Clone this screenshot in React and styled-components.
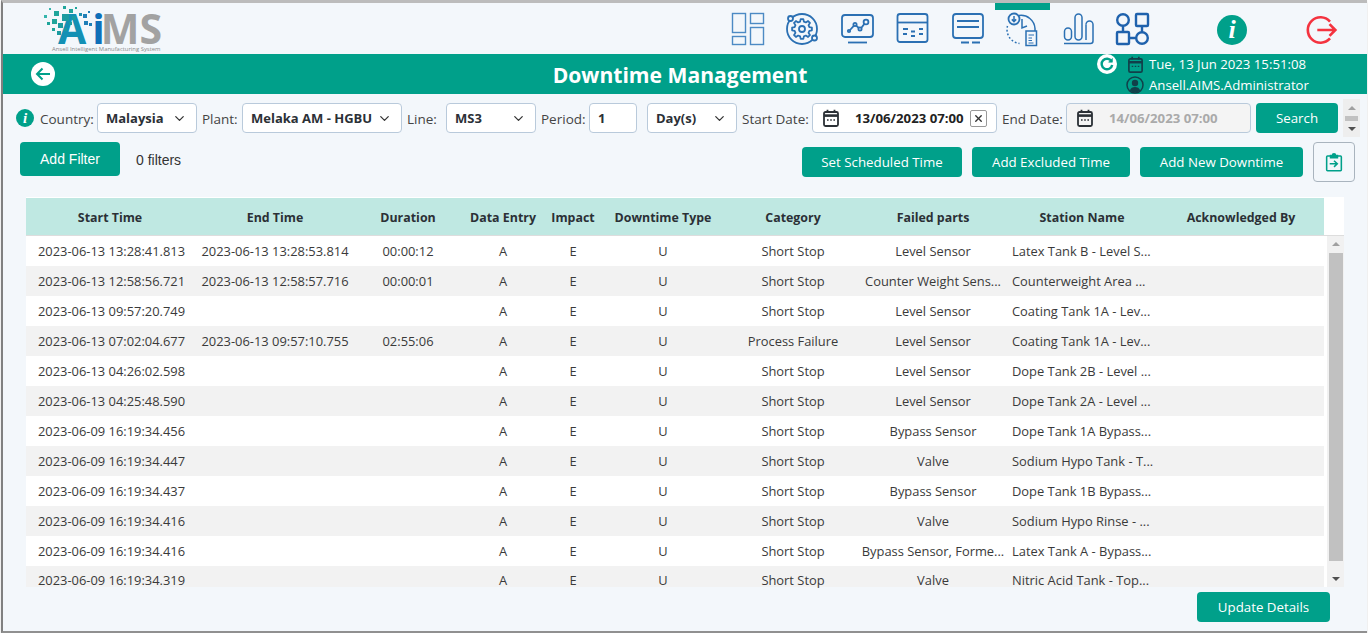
import React from 'react';
import styled, { createGlobalStyle } from 'styled-components';
import { ChevronDown, X } from 'lucide-react';

const FONT = '"Open Sans", "Noto Sans", sans-serif';
const TEAL = '#00a08a';
const ICON_BLUE = '#2b70b3';
const PAGE_BG = '#f3f7fb';

const GlobalStyle = createGlobalStyle`
  html, body {
    margin: 0;
    padding: 0;
    background: #fff;
    overflow: hidden;
  }
  * { box-sizing: border-box; }
`;

const columns = [
  { title: 'Start Time', key: 'start' },
  { title: 'End Time', key: 'end' },
  { title: 'Duration', key: 'duration' },
  { title: 'Data Entry', key: 'entry' },
  { title: 'Impact', key: 'impact' },
  { title: 'Downtime Type', key: 'type' },
  { title: 'Category', key: 'category' },
  { title: 'Failed parts', key: 'parts' },
  { title: 'Station Name', key: 'station' },
  { title: 'Acknowledged By', key: 'ack' },
];

const rows = [
  ['2023-06-13 13:28:41.813', '2023-06-13 13:28:53.814', '00:00:12', 'Short Stop', 'Level Sensor', 'Latex Tank B - Level S...'],
  ['2023-06-13 12:58:56.721', '2023-06-13 12:58:57.716', '00:00:01', 'Short Stop', 'Counter Weight Sens...', 'Counterweight Area ...'],
  ['2023-06-13 09:57:20.749', '', '', 'Short Stop', 'Level Sensor', 'Coating Tank 1A - Lev...'],
  ['2023-06-13 07:02:04.677', '2023-06-13 09:57:10.755', '02:55:06', 'Process Failure', 'Level Sensor', 'Coating Tank 1A - Lev...'],
  ['2023-06-13 04:26:02.598', '', '', 'Short Stop', 'Level Sensor', 'Dope Tank 2B - Level ...'],
  ['2023-06-13 04:25:48.590', '', '', 'Short Stop', 'Level Sensor', 'Dope Tank 2A - Level ...'],
  ['2023-06-09 16:19:34.456', '', '', 'Short Stop', 'Bypass Sensor', 'Dope Tank 1A Bypass...'],
  ['2023-06-09 16:19:34.447', '', '', 'Short Stop', 'Valve', 'Sodium Hypo Tank - T...'],
  ['2023-06-09 16:19:34.437', '', '', 'Short Stop', 'Bypass Sensor', 'Dope Tank 1B Bypass...'],
  ['2023-06-09 16:19:34.416', '', '', 'Short Stop', 'Valve', 'Sodium Hypo Rinse - ...'],
  ['2023-06-09 16:19:34.416', '', '', 'Short Stop', 'Bypass Sensor, Forme...', 'Latex Tank A - Bypass...'],
  ['2023-06-09 16:19:34.319', '', '', 'Short Stop', 'Valve', 'Nitric Acid Tank - Top...'],
];

// x, y, size, colour of the pixel cloud around the logo
const logoSquares = [
  [1, 9, 3, '#35b5ab'], [6, 2, 2, '#35b5ab'], [11, 5, 5, '#1fa59b'], [20, 0, 3, '#1fa59b'],
  [26, 3, 4, '#1fa59b'], [32, 1, 2, '#1fa59b'], [19, 8, 7, '#1b9ba0'], [29, 10, 4, '#1b9ba0'],
  [4, 16, 3, '#1fa59b'], [9, 13, 5, '#1fa59b'], [15, 17, 5, '#1b9ba0'], [9, 22, 3, '#1fa59b'],
  [14, 25, 4, '#1b9ba0'], [21, 22, 3, '#1b9ba0'], [36, 7, 3, '#1f8fb0'], [26, 16, 3, '#1b9ba0'],
  [40, 8, 4, '#1f7fb8'], [45, 5, 2, '#1f7fb8'], [41, 15, 4, '#1f7fb8'], [46, 17, 3, '#1f7fb8'],
];

function gearPath(cx, cy, outer, inner, teeth) {
  const step = (Math.PI * 2) / teeth;
  const pts = [];
  for (let i = 0; i < teeth; i++) {
    const a = i * step;
    [[-0.32, inner], [-0.17, outer], [0.17, outer], [0.32, inner]].forEach(([k, r]) => {
      const t = a + k * step;
      pts.push(`${(cx + r * Math.cos(t)).toFixed(2)} ${(cy + r * Math.sin(t)).toFixed(2)}`);
    });
  }
  return `M${pts.join('L')}Z`;
}

function CalendarIcon({ color = '#2b3036', size = 18 }) {
  return (
    <svg width={size} height={size} viewBox="0 0 18 18" fill="none" stroke={color} strokeWidth="1.8">
      <rect x="2" y="3" width="14" height="14" rx="1.5" />
      <path d="M2 6.6h14" strokeWidth="2.6" />
      <path d="M5.5 0.8v3M12.5 0.8v3" />
      <path d="M5 11h1.6M8.2 11h1.6M11.4 11h1.6" strokeWidth="1.5" />
    </svg>
  );
}

function NavIcon({ name }) {
  switch (name) {
    case 'dashboard':
      return (
        <svg width="36" height="36" viewBox="0 0 36 36" fill="none" stroke="#4c8ac4" strokeWidth="1.4">
          <rect x="2.5" y="2.5" width="13" height="19" />
          <rect x="2.5" y="25.5" width="13" height="8" />
          <rect x="20.5" y="2.5" width="13" height="10" />
          <rect x="20.5" y="16.5" width="13" height="17" />
        </svg>
      );
    case 'gear':
      return (
        <svg width="36" height="36" viewBox="0 0 36 36" fill="none" stroke={ICON_BLUE} strokeWidth="1.8">
          <circle cx="17" cy="18" r="15" />
          <circle cx="5.5" cy="7.5" r="2.5" fill={PAGE_BG} />
          <circle cx="29.5" cy="27" r="2.5" fill={PAGE_BG} />
          <path d={gearPath(17, 18, 10, 7.6, 8)} strokeLinejoin="round" />
          <circle cx="17" cy="18" r="3" />
        </svg>
      );
    case 'monitorChart':
      return (
        <svg width="36" height="36" viewBox="0 0 36 36" fill="none" stroke={ICON_BLUE} strokeWidth="1.8">
          <rect x="2" y="4" width="31" height="22" rx="3" />
          <path d="M8 31.5h19" />
          <circle cx="9" cy="20" r="1.2" />
          <circle cx="15" cy="13.5" r="1.6" />
          <circle cx="20" cy="18" r="1.6" />
          <circle cx="26" cy="11" r="2.4" />
          <path d="M10 19l4-4.3M16.2 14.6l2.6 2.4M21.2 17l3.4-4.4" />
        </svg>
      );
    case 'window':
      return (
        <svg width="36" height="36" viewBox="0 0 36 36" fill="none" stroke={ICON_BLUE} strokeWidth="1.8">
          <rect x="2.5" y="3" width="30" height="28" rx="2.5" />
          <path d="M2.5 11.5h30" />
          <path d="M8 18h5M8 23h4M16 20.5h4M16 25h4M24 18h4M24 23h4" />
        </svg>
      );
    case 'monitorLines':
      return (
        <svg width="36" height="36" viewBox="0 0 36 36" fill="none" stroke={ICON_BLUE} strokeWidth="1.8">
          <rect x="3" y="3" width="30" height="24" rx="3" />
          <path d="M7 10h22M7 16h22" />
          <path d="M11 31.5h8M22 31.5h8" />
        </svg>
      );
    case 'clockDoc':
      return (
        <svg width="36" height="36" viewBox="0 0 36 36" fill="none" stroke={ICON_BLUE} strokeWidth="1.5">
          <path d="M14 4.5A14 14 0 0 1 30 17.5v3" />
          <path d="M2.5 15a14 14 0 0 0 12 17.5" strokeDasharray="1.8 2" />
          <circle cx="9" cy="8" r="5.5" strokeWidth="1.8" />
          <path d="M9 5v5.5M6.8 8.4L9 10.6l2.2-2.2" />
          <path d="M17 8v9l5-2" />
          <rect x="21" y="20" width="10.5" height="14.5" fill={PAGE_BG} />
          <path d="M23.5 24h5.5M23.5 27h3.5M23.5 29.5h3.5M23.5 32h5" strokeWidth="1.2" />
        </svg>
      );
    case 'bars':
      return (
        <svg width="36" height="36" viewBox="0 0 36 36" fill="none" stroke={ICON_BLUE} strokeWidth="1.5">
          <rect x="4.5" y="17" width="7" height="12" rx="3.5" />
          <rect x="15" y="3" width="7" height="26" rx="3.5" />
          <path d="M26 13.5a3.5 3.5 0 0 1 7 0V30a2.5 2.5 0 0 1-2.5 2.5H4" />
          <path d="M26 13.5V29" />
        </svg>
      );
    case 'flow':
      return (
        <svg width="36" height="36" viewBox="0 0 36 36" fill="none" stroke="#1f62ad" strokeWidth="2.4">
          <circle cx="8" cy="9" r="5.8" />
          <rect x="21" y="3" width="12" height="12" rx="1" />
          <rect x="2" y="21" width="12" height="12" rx="1" />
          <circle cx="27" cy="27" r="5.8" />
          <path d="M8 15v6M27 15v6M14 27h7" />
        </svg>
      );
    default:
      return null;
  }
}

const navItems = ['dashboard', 'gear', 'monitorChart', 'window', 'monitorLines', 'clockDoc', 'bars', 'flow'];

function App() {
  return (
    <>
      <GlobalStyle />
      <Frame>
        <TopNav>
          <Logo>
            <LogoWord>
              <LogoBlue>A</LogoBlue>
              <LogoBlueI>i</LogoBlueI>
              <LogoGray>MS</LogoGray>
            </LogoWord>
            <LogoSquares width="50" height="30" viewBox="0 0 50 30">
              {logoSquares.map(([x, y, s, c], i) => (
                <rect key={i} x={x} y={y} width={s} height={s} fill={c} />
              ))}
            </LogoSquares>
            <LogoTag>Ansell Intelligent Manufacturing System</LogoTag>
          </Logo>
          <NavIcons>
            {navItems.map((name) => (
              <NavSlot key={name} $active={name === 'clockDoc'}>
                <NavIcon name={name} />
              </NavSlot>
            ))}
          </NavIcons>
          <NavInfo>i</NavInfo>
          <ExitIcon width="32" height="32" viewBox="0 0 34 34" fill="none" stroke="#f4333f" strokeWidth="2.8">
            <path d="M25.5 8A13.5 13.5 0 1 0 25.5 26" />
            <path d="M12 17h19M25 10.8l6.2 6.2-6.2 6.2" />
          </ExitIcon>
        </TopNav>

        <TitleBar>
          <RoundButton>
            <svg width="18" height="18" viewBox="0 0 18 18" fill="none" stroke={TEAL} strokeWidth="2">
              <path d="M16 9H3M8.5 3.5L3 9l5.5 5.5" />
            </svg>
          </RoundButton>
          <PageTitle>Downtime Management</PageTitle>
          <StatusBlock>
            <RefreshButton>
              <svg width="14" height="14" viewBox="0 0 14 14" fill="none" stroke={TEAL} strokeWidth="2.4">
                <path d="M11.5 4.2A5.3 5.3 0 1 0 12.2 8" />
                <path d="M12.4 1.4v3.8H8.6z" fill={TEAL} strokeWidth="0.6" />
              </svg>
            </RefreshButton>
            <StatusLines>
              <StatusLine>
                <StatusIcon><CalendarIcon color="#11404a" size={17} /></StatusIcon>
                <span>Tue, 13 Jun 2023 15:51:08</span>
              </StatusLine>
              <StatusLine>
                <StatusIcon>
                  <svg width="18" height="18" viewBox="0 0 18 18" fill="none">
                    <circle cx="9" cy="9" r="8" stroke="#11404a" strokeWidth="1.5" />
                    <circle cx="9" cy="7" r="3.2" fill="#11404a" />
                    <path d="M3.8 14.5c.8-2.6 2.8-3.6 5.2-3.6s4.4 1 5.2 3.6a8 8 0 0 1-10.4 0z" fill="#11404a" />
                  </svg>
                </StatusIcon>
                <span>Ansell.AIMS.Administrator</span>
              </StatusLine>
            </StatusLines>
          </StatusBlock>
        </TitleBar>

        <FilterRow>
          <FilterInfo>i</FilterInfo>
          <FieldLabel $width={63} $first>Country:</FieldLabel>
          <SelectBox $width={100}>Malaysia<ChevronDown size={15} color="#333" /></SelectBox>
          <FieldLabel $width={45}>Plant:</FieldLabel>
          <SelectBox $width={160}>Melaka AM - HGBU<ChevronDown size={15} color="#333" /></SelectBox>
          <FieldLabel $width={44}>Line:</FieldLabel>
          <SelectBox $width={90}>MS3<ChevronDown size={15} color="#333" /></SelectBox>
          <FieldLabel $width={53}>Period:</FieldLabel>
          <SelectBox $width={48}>1</SelectBox>
          <Spacer $width={10} />
          <SelectBox $width={90}>Day(s)<ChevronDown size={15} color="#333" /></SelectBox>
          <FieldLabel $width={75}>Start Date:</FieldLabel>
          <DateBox>
            <CalendarIcon />
            <DateText>13/06/2023 07:00</DateText>
            <ClearBox><X size={11} strokeWidth={3} color="#333" /></ClearBox>
          </DateBox>
          <FieldLabel $width={69}>End Date:</FieldLabel>
          <DateBox $disabled>
            <CalendarIcon />
            <DateText $disabled>14/06/2023 07:00</DateText>
          </DateBox>
          <SearchButton>Search</SearchButton>
          <MiniScroll>
            <ArrowUp $color="#a0a0a0" />
            <MiniThumb />
            <ArrowDown $color="#505050" />
          </MiniScroll>
        </FilterRow>

        <ActionRow>
          <AddFilterButton>Add Filter</AddFilterButton>
          <FilterCount>0 filters</FilterCount>
          <ActionButton $width={160} $first>Set Scheduled Time</ActionButton>
          <ActionButton $width={158}>Add Excluded Time</ActionButton>
          <ActionButton $width={163}>Add New Downtime</ActionButton>
          <ClipButton>
            <svg width="18" height="19" viewBox="0 0 20 22" fill="none" stroke={TEAL} strokeWidth="1.8">
              <path d="M6 3.5H2.5a1 1 0 0 0-1 1V19.5a1 1 0 0 0 1 1h15a1 1 0 0 0 1-1V4.5a1 1 0 0 0-1-1H14" />
              <path d="M6 5.5V2.8h2.2a1.8 1.8 0 0 1 3.6 0H14v2.7z" fill={TEAL} />
              <path d="M5 12.5h8M10 9l3.8 3.5L10 16" />
            </svg>
          </ClipButton>
        </ActionRow>

        <TableCard>
          <HeaderRow>
            {columns.map((c) => <HeaderCell key={c.key}>{c.title}</HeaderCell>)}
          </HeaderRow>
          <TableBody>
            <RowList>
              {rows.map((r, i) => (
                <DataRow key={i} $striped={i % 2 === 1}>
                  <Cell>{r[0]}</Cell>
                  <Cell>{r[1]}</Cell>
                  <Cell>{r[2]}</Cell>
                  <Cell>A</Cell>
                  <Cell>E</Cell>
                  <Cell>U</Cell>
                  <Cell>{r[3]}</Cell>
                  <Cell>{r[4]}</Cell>
                  <Cell $left>{r[5]}</Cell>
                  <Cell />
                </DataRow>
              ))}
            </RowList>
            <Scrollbar>
              <ArrowUp $color="#a0a0a0" />
              <ScrollThumb />
              <ArrowDown $color="#505050" />
            </Scrollbar>
          </TableBody>
        </TableCard>

        <FooterRow>
          <UpdateButton>Update Details</UpdateButton>
        </FooterRow>
      </Frame>
    </>
  );
}

export default App;

const Frame = styled.div`
  width: 1366px;
  height: 633px;
  margin-left: 1px;
  background: ${PAGE_BG};
  border-top: 3px solid #bcbcbc;
  border-left: 2px solid #808080;
  border-bottom: 2px solid #909090;
  box-shadow: 0 2px 4px rgba(0, 0, 0, 0.15);
  font-family: ${FONT};
  color: #333;
  overflow: hidden;
`;

const TopNav = styled.div`
  display: flex;
  align-items: center;
  height: 51px;
`;

const Logo = styled.div`
  position: relative;
  width: 717px;
  height: 51px;
  flex: none;
`;

const LogoSquares = styled.svg`
  position: absolute;
  left: 40px;
  top: 3px;
`;

const LogoWord = styled.div`
  position: absolute;
  left: 55px;
  top: 8px;
  font-size: 41px;
  font-weight: 700;
  line-height: 34px;
  white-space: nowrap;
`;

const LogoBlue = styled.span`
  color: #1390b4;
`;

const LogoBlueI = styled.span`
  margin-left: 6px;
  letter-spacing: -4px;
  color: #0f6fb8;
`;

const LogoGray = styled.span`
  color: #a2a2a2;
`;

const LogoTag = styled.div`
  position: absolute;
  left: 49px;
  top: 42px;
  font-size: 5.9px;
  line-height: 8px;
  color: #8a8a8a;
  white-space: nowrap;
`;

const NavIcons = styled.div`
  display: flex;
  flex: none;
`;

const NavSlot = styled.div`
  width: 55px;
  height: 51px;
  display: flex;
  align-items: center;
  justify-content: center;
  padding-bottom: 6px;
  border-top: 7px solid ${(p) => (p.$active ? TEAL : 'transparent')};
`;

const Badge = styled.div`
  flex: none;
  border-radius: 50%;
  background: ${TEAL};
  color: #fff;
  font-family: "Liberation Serif", serif;
  font-style: italic;
  font-weight: 700;
  text-align: center;
`;

const NavInfo = styled(Badge)`
  width: 30px;
  height: 30px;
  margin-left: 57px;
  margin-top: 2px;
  font-size: 26px;
  line-height: 30px;
`;

const FilterInfo = styled(Badge)`
  width: 18px;
  height: 18px;
  font-size: 15px;
  line-height: 18px;
`;

const ExitIcon = styled.svg`
  margin-left: 59px;
  margin-top: 2px;
  flex: none;
`;

const TitleBar = styled.div`
  display: flex;
  align-items: center;
  height: 40px;
  background: ${TEAL};
  padding-left: 28px;
`;

const RoundButton = styled.div`
  width: 24px;
  height: 24px;
  border-radius: 50%;
  background: #fff;
  display: flex;
  align-items: center;
  justify-content: center;
  flex: none;
`;

const PageTitle = styled.div`
  margin-left: 494px;
  width: 262px;
  text-align: center;
  color: #fff;
  font-size: 21.1px;
  font-weight: 700;
  white-space: nowrap;
`;

const StatusBlock = styled.div`
  margin-left: 286px;
  display: flex;
  align-items: flex-start;
  height: 40px;
`;

const RefreshButton = styled.div`
  width: 20px;
  height: 20px;
  border-radius: 50%;
  background: #fff;
  display: flex;
  align-items: center;
  justify-content: center;
  flex: none;
`;

const StatusLines = styled.div`
  margin-left: 9px;
  display: flex;
  flex-direction: column;
  gap: 1px;
`;

const StatusLine = styled.div`
  display: flex;
  align-items: center;
  gap: 5px;
  height: 20px;
  color: #fff;
  font-size: 13.2px;
  white-space: nowrap;
`;

const StatusIcon = styled.div`
  width: 18px;
  height: 18px;
  flex: none;
  display: flex;
  align-items: center;
  justify-content: center;
`;

const FilterRow = styled.div`
  display: flex;
  align-items: center;
  height: 38px;
  margin-top: 5px;
  padding-left: 13px;
`;

const FieldLabel = styled.div`
  width: ${(p) => p.$width}px;
  flex: none;
  padding: 2px 0 0 ${(p) => (p.$first ? 6 : 5)}px;
  font-size: 13.5px;
  white-space: nowrap;
  color: #444;
`;

const Spacer = styled.div`
  width: ${(p) => p.$width}px;
  flex: none;
`;

const SelectBox = styled.div`
  width: ${(p) => p.$width}px;
  height: 30px;
  flex: none;
  display: flex;
  align-items: center;
  justify-content: space-between;
  padding: 0 9px 0 8px;
  background: #fff;
  border: 1px solid #b9cadb;
  border-radius: 4px;
  font-size: 13px;
  font-weight: 700;
  color: #2b3036;
  white-space: nowrap;
`;

const DateBox = styled.div`
  width: 185px;
  height: 30px;
  flex: none;
  display: flex;
  align-items: center;
  padding: 0 9px;
  background: ${(p) => (p.$disabled ? '#f4f4f4' : '#fff')};
  border: 1px solid #b9cadb;
  border-radius: 4px;
`;

const DateText = styled.div`
  margin-left: 15px;
  font-size: 13.2px;
  font-weight: 700;
  color: ${(p) => (p.$disabled ? '#aaa' : '#222')};
  white-space: nowrap;
`;

const ClearBox = styled.div`
  width: 17px;
  height: 17px;
  margin-left: auto;
  display: flex;
  align-items: center;
  justify-content: center;
  border: 1px solid #999;
  border-radius: 2px;
`;

const TealButton = styled.div`
  display: flex;
  align-items: center;
  justify-content: center;
  flex: none;
  background: ${TEAL};
  color: #fff;
  border-radius: 4px;
  font-size: 13.3px;
  white-space: nowrap;
`;

const SearchButton = styled(TealButton)`
  width: 82px;
  height: 30px;
  margin-left: 5px;
`;

const MiniScroll = styled.div`
  width: 17px;
  height: 38px;
  margin-left: 5px;
  flex: none;
  background: #eee;
  display: flex;
  flex-direction: column;
  align-items: center;
  justify-content: space-between;
  padding: 7px 0 6px;
`;

const MiniThumb = styled.div`
  width: 13px;
  height: 5px;
  background: #c1c1c1;
`;

const ArrowUp = styled.div`
  width: 0;
  height: 0;
  flex: none;
  border-left: 4px solid transparent;
  border-right: 4px solid transparent;
  border-bottom: 4px solid ${(p) => p.$color};
`;

const ArrowDown = styled.div`
  width: 0;
  height: 0;
  flex: none;
  border-left: 4px solid transparent;
  border-right: 4px solid transparent;
  border-top: 4px solid ${(p) => p.$color};
`;

const ActionRow = styled.div`
  display: flex;
  align-items: center;
  height: 40px;
  margin-top: 5px;
  padding-left: 17px;
`;

const AddFilterButton = styled(TealButton)`
  width: 100px;
  height: 34px;
  align-self: flex-start;
  font-family: "Liberation Sans", sans-serif;
  font-size: 14px;
`;

const FilterCount = styled.div`
  width: 682px;
  padding-left: 16px;
  align-self: flex-start;
  line-height: 36px;
  font-family: "Liberation Sans", sans-serif;
  font-size: 14px;
  color: #333;
`;

const ActionButton = styled(TealButton)`
  width: ${(p) => p.$width}px;
  height: 30px;
  margin-left: ${(p) => (p.$first ? 0 : 10)}px;
`;

const ClipButton = styled.div`
  width: 42px;
  height: 40px;
  margin-left: 10px;
  flex: none;
  display: flex;
  align-items: center;
  justify-content: center;
  border: 1px solid #a9b4be;
  border-radius: 4px;
`;

const TableCard = styled.div`
  width: 1318px;
  margin: 15px 0 0 23px;
  padding-top: 1px;
  background: #fff;
`;

const gridColumns = '168px 162px 104px 86px 54px 126px 134px 146px 152px 166px';

const HeaderRow = styled.div`
  display: grid;
  grid-template-columns: ${gridColumns};
  width: 1298px;
  height: 37px;
  background: #bfe8e2;
`;

const HeaderCell = styled.div`
  display: flex;
  align-items: center;
  justify-content: center;
  padding-top: 1px;
  font-size: 12.4px;
  font-weight: 700;
  color: #2b3036;
  white-space: nowrap;
`;

const TableBody = styled.div`
  display: flex;
  height: 352px;
  border-top: 1px solid #ddd;
`;

const RowList = styled.div`
  width: 1298px;
  flex: none;
`;

const DataRow = styled.div`
  display: grid;
  grid-template-columns: ${gridColumns};
  height: 30px;
  background: ${(p) => (p.$striped ? '#f2f2f2' : '#fff')};

  &:last-child {
    height: 21px;
  }
  &:last-child > div {
    align-items: flex-start;
    padding-top: 7px;
  }
`;

const Cell = styled.div`
  display: flex;
  align-items: center;
  justify-content: ${(p) => (p.$left ? 'flex-start' : 'center')};
  padding-left: ${(p) => (p.$left ? 6 : 0)}px;
  font-size: 12.9px;
  line-height: 14px;
  color: #3a3a3a;
  white-space: nowrap;

  &:first-child {
    padding-left: 3px;
  }
`;

const Scrollbar = styled.div`
  width: 17px;
  margin-left: 3px;
  flex: none;
  background: #f1f1f1;
  display: flex;
  flex-direction: column;
  align-items: center;
  padding: 6px 0;
`;

const ScrollThumb = styled.div`
  width: 14px;
  height: 308px;
  margin: 7px 0 auto;
  background: #c1c1c1;
`;

const FooterRow = styled.div`
  display: flex;
  justify-content: flex-end;
  padding: 5px 37px 0 0;
`;

const UpdateButton = styled(TealButton)`
  width: 133px;
  height: 30px;
`;
